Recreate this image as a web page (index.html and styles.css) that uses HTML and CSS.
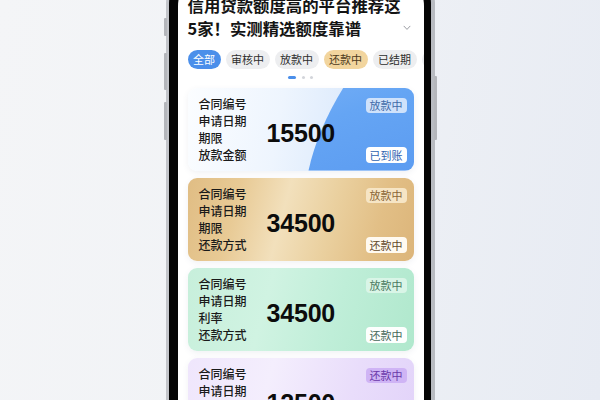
FILE: index.html
```html
<!DOCTYPE html>
<html lang="zh-CN">
<head>
<meta charset="utf-8">
<link rel="stylesheet" href="styles.css">
</head>
<body>
<div class="stage">
  <div class="phone">
    <span class="side side-l1"></span>
    <span class="side side-l2"></span>
    <span class="side side-l3"></span>
    <span class="side side-r1"></span>
    <div class="screen">
      <div class="head">
        <h1 class="title">信用贷款额度高的平台推荐这<br>5家！实测精选额度靠谱</h1>
        <svg class="chev" width="8" height="6" viewBox="0 0 8 6"><path d="M1 1.2 L4 4.4 L7 1.2" fill="none" stroke="#9a9ca2" stroke-width="1" stroke-linecap="round" stroke-linejoin="round"/></svg>
      </div>
      <div class="tabs">
        <span class="pill pill-active">全部</span>
        <span class="pill">审核中</span>
        <span class="pill">放款中</span>
        <span class="pill pill-gold">还款中</span>
        <span class="pill">已结期</span>
        <span class="pill">逾期中</span>
      </div>
      <div class="dots"><span class="dot dot-on"></span><span class="dot"></span><span class="dot"></span></div>
      <div class="cards">
        <div class="card card-blue">
          <div class="labels"><div>合同编号</div><div>申请日期</div><div>期限</div><div>放款金额</div></div>
          <div class="amount">15500</div>
          <div class="badges"><span class="badge">放款中</span><span class="badge badge-low">已到账</span></div>
        </div>
        <div class="card card-gold">
          <div class="labels"><div>合同编号</div><div>申请日期</div><div>期限</div><div>还款方式</div></div>
          <div class="amount">34500</div>
          <div class="badges"><span class="badge">放款中</span><span class="badge badge-low">还款中</span></div>
        </div>
        <div class="card card-green">
          <div class="labels"><div>合同编号</div><div>申请日期</div><div>利率</div><div>还款方式</div></div>
          <div class="amount">34500</div>
          <div class="badges"><span class="badge">放款中</span><span class="badge badge-low">还款中</span></div>
        </div>
        <div class="card card-purple">
          <div class="labels"><div>合同编号</div><div>申请日期</div><div>期限</div><div>还款方式</div></div>
          <div class="amount">12500</div>
          <div class="badges"><span class="badge">还款中</span><span class="badge badge-low">已到账</span></div>
        </div>
      </div>
    </div>
  </div>
</div>
</body>
</html>
```

FILE: styles.css
```css
* { box-sizing: border-box; }
html, body { margin: 0; padding: 0; }
body {
  width: 600px;
  height: 400px;
  overflow: hidden;
  font-family: "Noto Sans CJK SC", "Noto Sans", sans-serif;
  background: linear-gradient(100deg, #f4f5f7 0%, #f1f3f6 40%, #e7ebf3 100%);
}
.stage {
  height: 400px;
  display: flex;
  justify-content: center;
  overflow: hidden;
}
.phone {
  position: relative;
  margin-top: -40px;
  width: 269px;
  height: 520px;
  border: 3px solid #c3c5ca;
  border-right: 4px solid #b8bbc1;
  border-radius: 44px;
  background: #050505;
  padding: 9px 7px 0 9px;
  flex: none;
}
.side {
  position: absolute;
  width: 3px;
  background: #b4b6bb;
  border-radius: 1px;
}
.side-l1 { left: -5px; top: 55px; height: 18px; }
.side-l2 { left: -5px; top: 90px; height: 37px; }
.side-l3 { left: -5px; top: 139px; height: 38px; }
.side-r1 { right: -6px; top: 113px; height: 64px; }
.screen {
  background: #fff;
  height: 520px;
  border-radius: 34px 34px 0 0;
  padding: 22px 10px 0 10px;
  overflow: hidden;
}
.head {
  display: flex;
  align-items: flex-end;
}
.title {
  margin: 0;
  flex: 1;
  font-size: 16.4px;
  line-height: 23px;
  font-weight: 700;
  color: #141414;
  white-space: nowrap;
}
.chev {
  flex: none;
  margin: 0 3px 9px 0;
}
.tabs {
  display: flex;
  gap: 5px;
  margin: 10px -10px 0 0;
  overflow: hidden;
}
.pill {
  flex: none;
  height: 19px;
  line-height: 19px;
  padding: 0 5.5px;
  border-radius: 10px;
  font-size: 11px;
  color: #2e2e2e;
  background: #edeef0;
}
.pill-active { background: #4b8fea; color: #fff; }
.pill-gold { background: #f2d59e; color: #4d3a1b; }
.dots {
  display: flex;
  justify-content: center;
  gap: 5.5px;
  margin-top: 7px;
  height: 3px;
}
.dot { width: 3px; height: 3px; border-radius: 2px; background: #d3d5da; }
.dot-on { width: 8px; background: #4b8fea; }
.cards {
  display: flex;
  flex-direction: column;
  gap: 7px;
  margin-top: 8.5px;
}
.card {
  position: relative;
  height: 83px;
  border-radius: 9px;
  display: flex;
  align-items: center;
  padding: 0 7px 0 11px;
  overflow: hidden;
  box-shadow: 0 2px 6px rgba(60, 80, 110, 0.08);
}
.card > * { position: relative; }
.labels {
  flex: none;
  font-size: 12px;
  line-height: 17px;
  font-weight: 500;
  color: #1a1a1a;
}
.amount {
  margin: 9px 0 0 20px;
  font-family: "Liberation Sans", Arial, sans-serif;
  font-weight: 700;
  font-size: 25px;
  color: #0c0c0c;
  letter-spacing: -0.2px;
}
.badges {
  margin-left: auto;
  align-self: stretch;
  display: flex;
  flex-direction: column;
  justify-content: space-between;
  align-items: flex-end;
  padding: 10px 0 8px 0;
}
.badge {
  height: 15px;
  line-height: 15px;
  padding: 0 4px;
  border-radius: 4px;
  font-size: 11px;
}
.badge-low { height: 16px; line-height: 16px; }

.card-blue {
  background: linear-gradient(100deg, #fbfdff 0%, #eef5fe 40%, #dceafc 70%);
}
.card-blue::before {
  content: "";
  position: absolute;
  inset: 0;
  background: linear-gradient(160deg, #7db4f7 0%, #65a5f4 50%, #5c9cf1 100%);
  clip-path: path("M156 0 Q130 42 121 83 L240 83 L240 0 Z");
}
.card-blue .badge { background: #cfe2fb; color: #3f6ba8; }
.card-blue .badge-low { background: #fff; color: #2f63b0; }

.card-gold {
  background: linear-gradient(105deg, #e0bd84 0%, #e8ca95 22%, #f2e0bc 42%, #ead09f 62%, #e2bf86 82%, #dcb57a 100%);
}
.card-gold .badge { background: #f6e5c5; color: #8a6536; }
.card-gold .badge-low { background: #fffaf1; color: #62492a; }

.card-green {
  background: linear-gradient(105deg, #c7efdb 0%, #d0f3e2 35%, #bfeed8 65%, #b0e8cd 100%);
}
.card-green .badge { background: #d9f5e7; color: #4b7a61; }
.card-green .badge-low { background: #fdfffe; color: #46685a; }

.card-purple {
  background: linear-gradient(105deg, #efe6fc 0%, #f4eefd 35%, #e9ddfb 70%, #e2d3f9 100%);
}
.card-purple .badge { background: #cfb4f5; color: #6a38a8; }
.card-purple .badge-low { background: #fff; color: #6a38a8; }
```
